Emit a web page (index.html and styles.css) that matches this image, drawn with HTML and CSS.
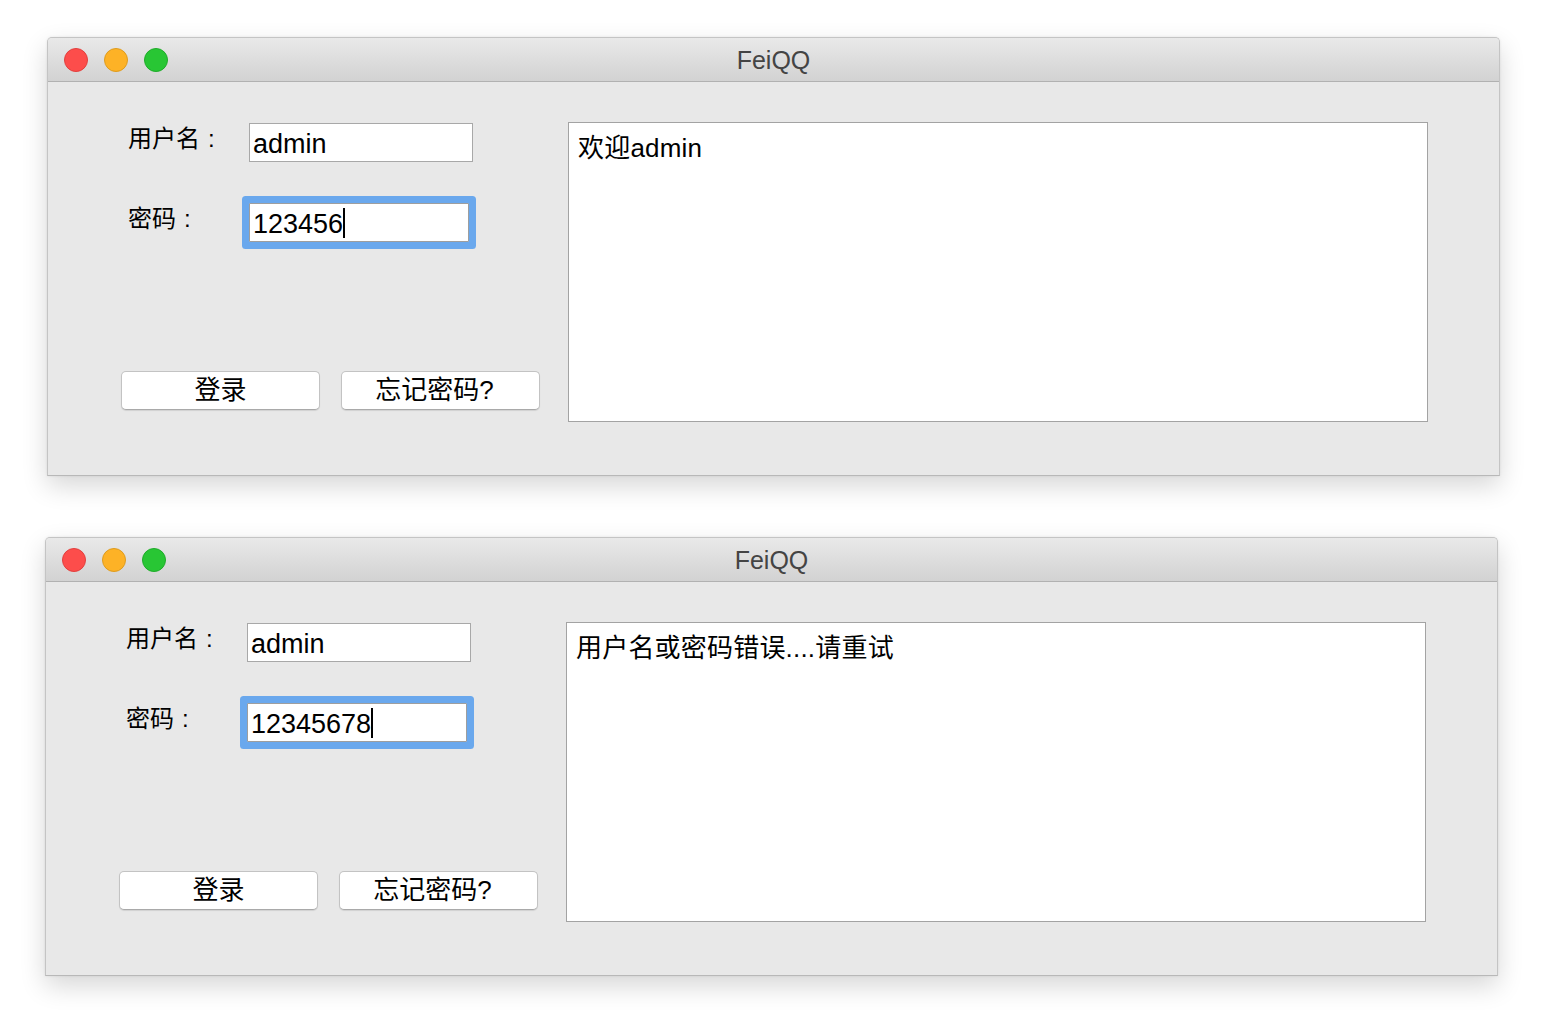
FILE: index.html
```html
<!DOCTYPE html>
<html lang="zh-CN">
<head>
<meta charset="utf-8">
<title>FeiQQ</title>
<link rel="stylesheet" href="styles.css">
</head>
<body>
<div class="page">
  <div class="window win-1">
    <div class="titlebar">
      <div class="lights">
        <span class="light red"></span>
        <span class="light yellow"></span>
        <span class="light green"></span>
      </div>
      <div class="title">FeiQQ</div>
    </div>
    <div class="content">
      <div class="form">
        <div class="row row-user">
          <div class="label">用户名<span class="colon">:</span></div>
          <div class="field">admin</div>
        </div>
        <div class="row row-pass">
          <div class="label">密码<span class="colon">:</span></div>
          <div class="field focused">123456<span class="caret"></span></div>
        </div>
        <div class="buttons">
          <div class="btn">登录</div>
          <div class="btn btn-forgot">忘记密码?</div>
        </div>
      </div>
      <div class="output">欢迎admin</div>
    </div>
  </div>

  <div class="window win-2">
    <div class="titlebar">
      <div class="lights">
        <span class="light red"></span>
        <span class="light yellow"></span>
        <span class="light green"></span>
      </div>
      <div class="title">FeiQQ</div>
    </div>
    <div class="content">
      <div class="form">
        <div class="row row-user">
          <div class="label">用户名<span class="colon">:</span></div>
          <div class="field">admin</div>
        </div>
        <div class="row row-pass">
          <div class="label">密码<span class="colon">:</span></div>
          <div class="field focused">12345678<span class="caret"></span></div>
        </div>
        <div class="buttons">
          <div class="btn">登录</div>
          <div class="btn btn-forgot">忘记密码?</div>
        </div>
      </div>
      <div class="output">用户名或密码错误....请重试</div>
    </div>
  </div>
</div>
</body>
</html>
```

FILE: styles.css
```css
html, body {
  margin: 0;
  padding: 0;
  background: #ffffff;
}

body {
  font-family: "Liberation Sans", "Noto Sans CJK SC", sans-serif;
  color: #000;
}

.page {
  padding: 37px 0 60px;
  display: flex;
  flex-direction: column;
}

.window {
  width: 1451px;
  height: 437px;
  border: 1px solid #c4c4c4;
  border-bottom-color: #b8b8b8;
  border-radius: 5px 5px 0 0;
  background: #e8e8e8;
  box-shadow: 0 10px 26px rgba(0, 0, 0, 0.16), 0 0 3px rgba(0, 0, 0, 0.08);
  display: flex;
  flex-direction: column;
  overflow: hidden;
}

.win-1 {
  margin-left: 47px;
}

.win-2 {
  margin-left: 45px;
  margin-top: 61px;
}

.titlebar {
  height: 43px;
  flex: none;
  border-bottom: 1px solid #b1b1b1;
  background: linear-gradient(#e9e9e9, #d2d2d2);
  display: flex;
  align-items: center;
  position: relative;
}

.lights {
  display: flex;
  gap: 16px;
  padding-left: 16px;
  margin-top: 1px;
}

.light {
  width: 22px;
  height: 22px;
  border-radius: 50%;
  border: 1px solid;
}

.red { background: #fd4d4b; border-color: #e2403e; }
.yellow { background: #fdb226; border-color: #de9c1f; }
.green { background: #28c634; border-color: #1fac2a; }

.title {
  position: absolute;
  left: 0;
  right: 0;
  top: 0;
  bottom: 0;
  display: flex;
  align-items: center;
  justify-content: center;
  font-size: 25px;
  color: #444444;
  padding-top: 1px;
}

.content {
  flex: 1;
  display: flex;
  gap: 27px;
  padding: 40px 0 0 73px;
}

.form {
  width: 420px;
  display: flex;
  flex-direction: column;
}

.row {
  display: flex;
  align-items: flex-start;
  height: 39px;
}

.row-user {
  margin-top: 1px;
}

.row-pass {
  margin-top: 41px;
}

.label {
  width: 121px;
  padding-left: 7px;
  font-size: 24px;
  line-height: 32px;
}

.colon {
  margin-left: 8px;
}

.field {
  box-sizing: border-box;
  width: 224px;
  height: 39px;
  background: #fff;
  border: 1px solid #a8a8a8;
  font-size: 27px;
  line-height: 37px;
  padding: 3px 0 0 3px;
  display: flex;
  align-items: center;
}

.field.focused {
  width: 220px;
  border-color: #9e9e9e;
  border-radius: 1px;
  box-shadow: 0 0 0 7px #6aa8ed;
}

.caret {
  display: inline-block;
  width: 1.5px;
  height: 30px;
  background: #000;
  margin-top: -2px;
}

.buttons {
  margin-top: 129px;
  display: flex;
  gap: 21px;
}

.btn {
  box-sizing: border-box;
  width: 199px;
  height: 39px;
  background: #fff;
  border: 1px solid #c3c3c3;
  border-bottom-color: #a9a9a9;
  border-radius: 5px;
  box-shadow: 0 1px 1px rgba(0, 0, 0, 0.1);
  font-size: 26px;
  line-height: 37px;
  text-align: center;
}

.btn-forgot {
  padding-right: 12px;
}

.output {
  box-sizing: border-box;
  width: 860px;
  height: 300px;
  background: #fff;
  border: 1px solid #a3a3a3;
  padding: 8px 9px;
  font-size: 26px;
  line-height: 34px;
  letter-spacing: 0.2px;
}
```
